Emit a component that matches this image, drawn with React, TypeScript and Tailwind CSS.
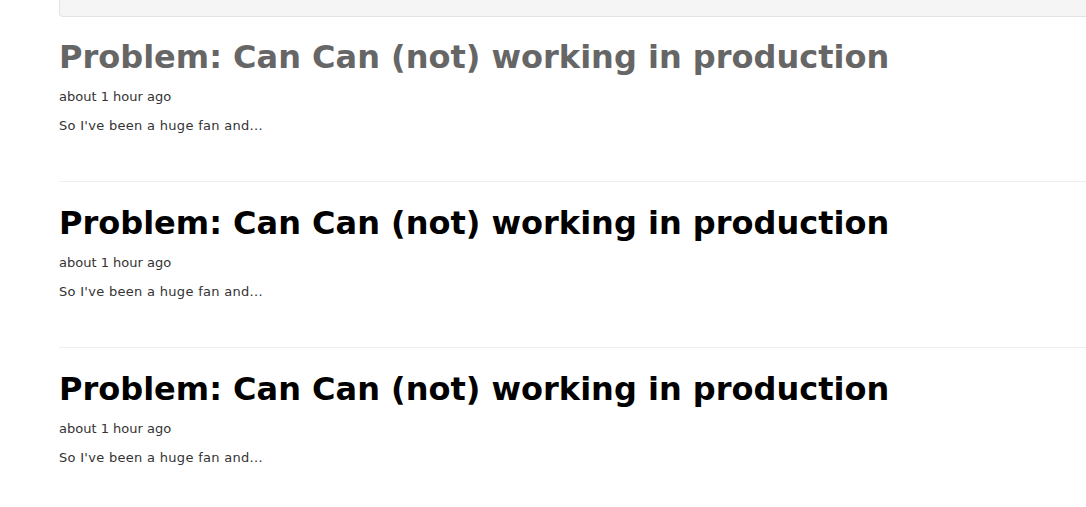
import React from "react";

const posts = [
  { title: "Problem: Can Can (not) working in production", muted: true },
  { title: "Problem: Can Can (not) working in production", muted: false },
  { title: "Problem: Can Can (not) working in production", muted: false },
];

const App = () => {
  return (
    <div className="min-h-screen bg-white overflow-hidden font-['DejaVu_Sans',Verdana,sans-serif]">
      <div className="pl-[59px] -mr-[20px]">
        <div className="h-[17px] bg-[#f5f5f5] border border-t-0 border-[#e3e3e3] rounded-b" />
        {posts.map((post, i) => (
          <div key={i} className={i > 0 ? "border-t border-[#eeeeee]" : ""}>
            <div className={i > 0 ? "pt-[21px] pb-[46px]" : "pt-[20px] pb-[46px]"}>
              <h1
                className={
                  "text-[32px] leading-[40px] font-bold " +
                  (post.muted ? "text-[#666666]" : "text-black")
                }
              >
                {post.title}
              </h1>
              <p className="text-[13px] leading-[18px] mt-[11px] text-[#333333]">about 1 hour ago</p>
              <p className="text-[13px] leading-[18px] mt-[11px] text-[#333333] tracking-[0.3px]">
                So I've been a huge fan and...
              </p>
            </div>
          </div>
        ))}
      </div>
    </div>
  );
};

export default App;
